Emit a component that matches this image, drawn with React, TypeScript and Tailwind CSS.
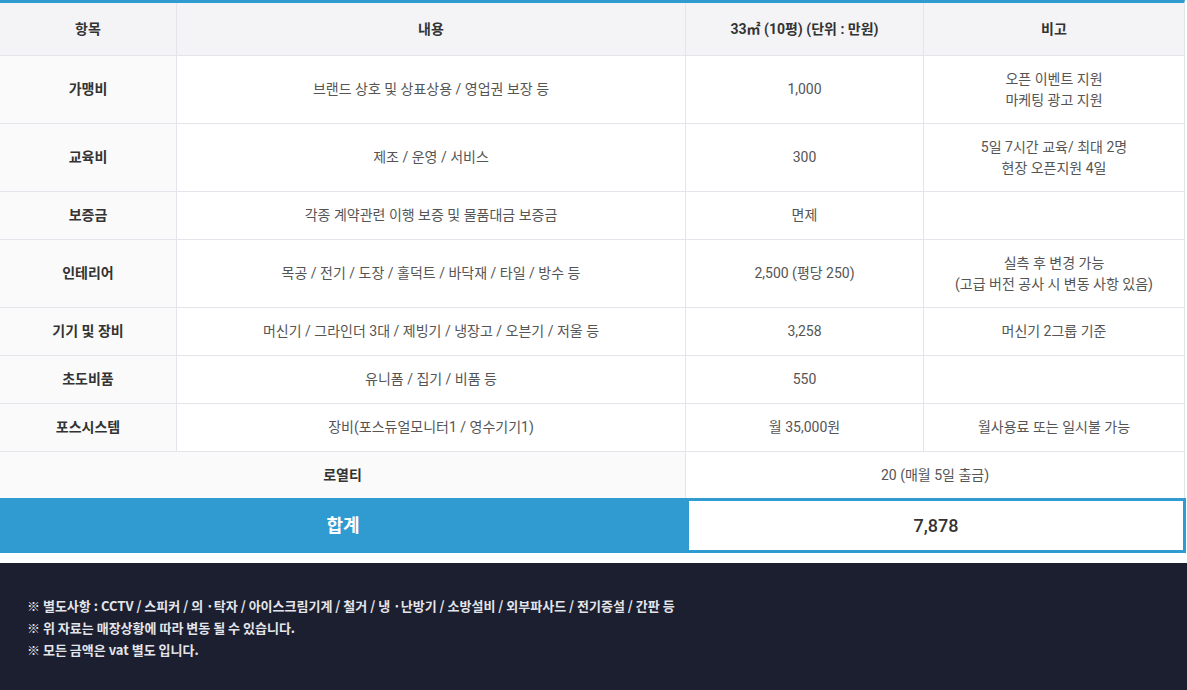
const rows = [
  { name: "가맹비", desc: "브랜드 상호 및 상표상용 / 영업권 보장 등", cost: "1,000", note: ["오픈 이벤트 지원", "마케팅 광고 지원"] },
  { name: "교육비", desc: "제조 / 운영 / 서비스", cost: "300", note: ["5일 7시간 교육/ 최대 2명", "현장 오픈지원 4일"] },
  { name: "보증금", desc: "각종 계약관련 이행 보증 및 물품대금 보증금", cost: "면제", note: [] },
  { name: "인테리어", desc: "목공 / 전기 / 도장 / 홀덕트 / 바닥재 / 타일 / 방수 등", cost: "2,500 (평당 250)", note: ["실측 후 변경 가능", "(고급 버전 공사 시 변동 사항 있음)"] },
  { name: "기기 및 장비", desc: "머신기 / 그라인더 3대 / 제빙기 / 냉장고 / 오븐기 / 저울 등", cost: "3,258", note: ["머신기 2그룹 기준"] },
  { name: "초도비품", desc: "유니폼 / 집기 / 비품 등", cost: "550", note: [] },
  { name: "포스시스템", desc: "장비(포스듀얼모니터1 / 영수기기1)", cost: "월 35,000원", note: ["월사용료 또는 일시불 가능"] },
]

const font = "font-['Roboto','Noto_Sans_CJK_KR',sans-serif]"

export default function App() {
  return (
    <div className={`w-[1187px] h-[690px] bg-white overflow-hidden ${font}`}>
      <div className="border-t-[3px] border-[#2f9bd1] border-r border-r-[#e3e5ea] mr-[2px]">
        {/* header */}
        <div className="grid grid-cols-[177px_509px_238px_1fr] h-[52px] bg-[#f4f4f6] text-[14px] font-bold text-[#333]">
          <div className="flex items-center justify-center border-r border-[#e3e5ea]">항목</div>
          <div className="flex items-center justify-center border-r border-[#e3e5ea]">내용</div>
          <div className="flex items-center justify-center border-r border-[#e3e5ea]">33㎡ (10평) (단위 : 만원)</div>
          <div className="flex items-center justify-center">비고</div>
        </div>

        {rows.map((r) => (
          <div
            key={r.name}
            className={`grid grid-cols-[177px_509px_238px_1fr] border-t border-[#e3e5ea] text-[14px] text-[#555] ${r.note.length > 1 ? "h-[68px]" : "h-[48px]"}`}
          >
            <div className="flex items-center justify-center border-r border-[#e3e5ea] bg-[#fafafa] font-bold text-[#333]">{r.name}</div>
            <div className="flex items-center justify-center border-r border-[#e3e5ea]">{r.desc}</div>
            <div className="flex items-center justify-center border-r border-[#e3e5ea]">{r.cost}</div>
            <div className="flex flex-col items-center justify-center leading-[21px]">
              {r.note.map((n) => (
                <span key={n}>{n}</span>
              ))}
            </div>
          </div>
        ))}

        {/* royalty */}
        <div className="grid grid-cols-[686px_1fr] h-[47px] border-t border-[#e3e5ea] text-[14px]">
          <div className="flex items-center justify-center border-r border-[#e3e5ea] bg-[#fafafa] font-bold text-[#333]">로열티</div>
          <div className="flex items-center justify-center text-[#555]">20 (매월 5일 출금)</div>
        </div>
      </div>

      {/* total */}
      <div className="grid grid-cols-[686px_1fr] h-[55px]">
        <div className="flex items-center justify-center bg-[#2f9bd1] text-[18px] font-bold text-white">합계</div>
        <div className="flex items-center justify-center border-[3px] border-[#2f9bd1] bg-white text-[18px] font-medium text-[#333] mr-[1px]">
          7,878
        </div>
      </div>

      {/* footer notes */}
      <div className="mt-[10px] h-[200px] bg-[#1b1f30] px-[27px] pt-[32px] text-[13px] font-bold text-[#e4e5ea] leading-[22px] font-['Noto_Sans_CJK_KR',sans-serif]">
        <p>※ 별도사항 : CCTV / 스피커 / 의 ·탁자 / 아이스크림기계 / 철거 / 냉 ·난방기 / 소방설비 / 외부파사드 / 전기증설 / 간판 등</p>
        <p>※ 위 자료는 매장상황에 따라 변동 될 수 있습니다.</p>
        <p>※ 모든 금액은 vat 별도 입니다.</p>
      </div>
    </div>
  )
}
